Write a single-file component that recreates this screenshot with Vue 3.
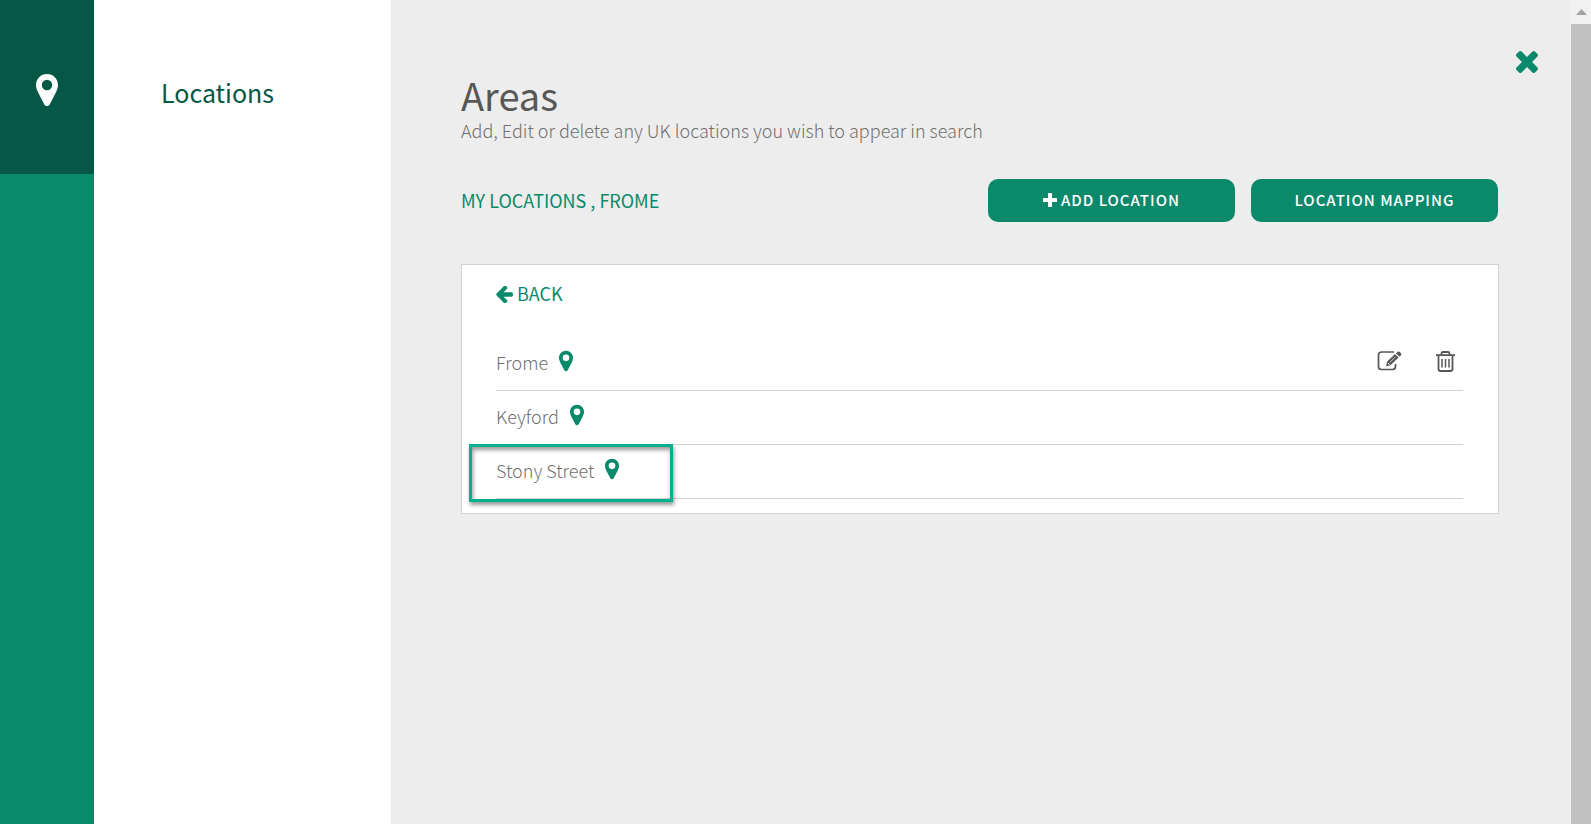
<script setup>
const locations = [
  { name: 'Frome', editable: true },
  { name: 'Keyford' },
  { name: 'Stony Street', highlighted: true },
]
const pin = 'M11 0C4.900 0 0 4.900 0 11C0 14 1.200 16.500 2.400 19L8.300 30.500C9.500 32.600 12.500 32.600 13.700 30.500L19.600 19C20.800 16.500 22 14 22 11C22 4.900 17.100 0 11 0ZM11 5.800A5.200 5.200 0 1 1 11 16.200A5.200 5.200 0 1 1 11 5.800Z'
</script>

<template>
  <div class="app">
    <nav class="rail">
      <a class="rail-item" href="#" aria-label="Locations">
        <svg class="rail-pin" viewBox="0 0 22 32"><path :d="pin" fill-rule="evenodd" /></svg>
      </a>
    </nav>
    <aside class="panel"><a href="#">Locations</a></aside>
    <main class="main">
      <button class="close" type="button" aria-label="Close">
        <svg viewBox="302 366 1188 1188"><path d="M1490 1322q0 40-28 68l-136 136q-28 28-68 28t-68-28l-294-294-294 294q-28 28-68 28t-68-28l-136-136q-28-28-28-68t28-68l294-294-294-294q-28-28-28-68t28-68l136-136q28-28 68-28t68 28l294 294 294-294q28-28 68-28t68 28l136 136q28 28 28 68t-28 68l-294 294 294 294q28 28 28 68z" /></svg>
      </button>
      <h1>Areas</h1>
      <p class="intro">Add, Edit or delete any UK locations you wish to appear in search</p>
      <div class="toolbar">
        <div class="crumbs"><a href="#">MY LOCATIONS</a> , <a href="#">FROME</a></div>
        <button class="action" type="button">
          <svg viewBox="0 0 14 14"><path d="M5 .5q0-.5.500-.5h3q.5 0 .5.500V5h4.500q.5 0 .5.500v3q0 .5-.5.500H9v4.500q0 .5-.5.500h-3q-.5 0-.5-.5V9H.5q-.5 0-.5-.5v-3q0-.5.500-.5H5z" /></svg>
          ADD LOCATION
        </button>
        <button class="action" type="button">LOCATION MAPPING</button>
      </div>
      <section class="card">
        <a class="back" href="#">
          <svg viewBox="180 210 1484 1500"><path d="M1664 896v128q0 53-32.500 90.500t-84.500 37.500h-704l293 294q38 36 38 90t-38 90l-75 76q-37 37-90 37-52 0-91-37l-651-652q-37-37-37-90 0-52 37-91l651-650q38-38 91-38 52 0 90 38l75 74q38 38 38 91t-38 91l-293 293h704q52 0 84.500 37.500t32.500 90.500z" /></svg>
          BACK
        </a>
        <ul>
          <li v-for="loc in locations" :key="loc.name">
            <span>{{ loc.name }}</span>
            <svg class="pin" viewBox="0 0 22 32"><path :d="pin" fill-rule="evenodd" /></svg>
            <div v-if="loc.editable" class="tools">
              <button type="button" aria-label="Edit">
                <svg class="edit" viewBox="0 0 24 20">
                  <path class="line" d="M16.500 1H4a3 3 0 0 0-3 3v11.500a3 3 0 0 0 3 3h11a3 3 0 0 0 3-3V13" stroke-width="1.700" />
                  <path d="M8.500 15.500l1.200-5L17.500 2.900l3.600 3.700-7.800 7.500z" />
                  <path d="M18.500 2.200L20 .8q1-.8 2 0l1.400 1.400q.9 1 0 2L22 5.700z" />
                  <path d="M12.300 11.300l5.500-5.200" stroke="#fff" stroke-width=".7" />
                  <path d="M10.400 12l1.700 1.700" stroke="#fff" stroke-width="1" />
                </svg>
              </button>
              <button type="button" aria-label="Delete">
                <svg class="trash" viewBox="0 0 19 21">
                  <path class="line" d="M0 4.200h19M5.500 4V2.500Q5.500 1 7 1h5q1.500 0 1.500 1.500V4M2.500 4.500V18q0 2 2 2h10q2 0 2-2V4.500" stroke-width="1.800" />
                  <path class="line" d="M6 8v8.500M9.500 8v8.500M13 8v8.500" stroke-width="1.500" />
                </svg>
              </button>
            </div>
            <div v-if="loc.highlighted" class="highlight"></div>
          </li>
        </ul>
      </section>
    </main>
    <div class="scrollbar">
      <svg viewBox="0 0 20 24"><path d="M5 15l5.500-6 5.500 6z" /></svg>
      <div class="thumb"></div>
    </div>
  </div>
</template>

<style>
body { background: #ededed; }
</style>

<style scoped>
.app {
  display: flex;
  min-height: 100vh;
  font-family: "Noto Sans CJK SC", "Open Sans", sans-serif;
  font-size: 18px;
  line-height: 24px;
  color: #575756;
  background: #ededed;
}
a { color: inherit; text-decoration: none; }
button { font: inherit; color: inherit; border: 0; padding: 0; background: none; cursor: pointer; }
svg { display: block; fill: currentColor; flex: none; }
.line { fill: none; stroke: currentColor; }
.rail { width: 94px; background: #0a896b; flex: none; }
.rail-item {
  display: flex;
  justify-content: center;
  height: 174px;
  padding-top: 74px;
  box-sizing: border-box;
  background: #055845;
  color: #fff;
}
.rail-pin { width: 22px; height: 32px; }
.panel {
  width: 297px;
  box-sizing: border-box;
  padding: 77px 0 0 67px;
  flex: none;
  background: #fff;
  color: #055845;
  font-size: 25px;
  line-height: 30px;
}
.main { position: relative; flex: 1; padding: 75px 70px 0; }
.close { position: absolute; top: 51px; right: 31px; color: #0a896b; }
.close svg { width: 22px; height: 22px; }
h1 { margin: 0; font-size: 38px; line-height: 40px; font-weight: 400; }
.intro { margin: 0; line-height: 30px; font-weight: 300; color: #706f6f; }
.toolbar { display: flex; align-items: center; gap: 16px; margin-top: 34px; padding-right: 1px; }
.crumbs { flex: 1; padding-bottom: 2px; color: #0a896b; }
.action {
  display: flex;
  align-items: center;
  justify-content: center;
  gap: 4px;
  width: 247px;
  height: 43px;
  padding-bottom: 2px;
  border-radius: 10px;
  background: #0a896b;
  color: #fff;
  font-size: 15px;
  font-weight: 500;
  letter-spacing: 1px;
}
.action svg { width: 14px; height: 14px; }
.card {
  margin-top: 42px;
  padding: 16px 35px 14px 34px;
  border: 1px solid #d2d2d2;
  background: #fff;
}
.back { display: flex; align-items: center; gap: 4px; color: #0a896b; }
.back svg { width: 17px; height: 17px; padding-top: 2px; }
ul { list-style: none; margin: 32px 0 0; padding: 0; }
li {
  position: relative;
  display: flex;
  align-items: center;
  gap: 11px;
  height: 54px;
  box-sizing: border-box;
  padding-bottom: 4px;
  border-bottom: 1px solid #d2d2d2;
  font-weight: 300;
}
li > span { color: #706f6f; }
.pin { width: 14px; height: 22px; padding-bottom: 1px; color: #0a896b; }
.tools { display: flex; align-items: center; gap: 34px; margin-left: auto; padding: 0 8px 1px 0; }
.edit { width: 25px; height: 20px; }
.trash { width: 19px; height: 21px; }
.highlight {
  position: absolute;
  left: -27px;
  top: -1px;
  width: 198px;
  height: 52px;
  border: 3px solid #05b08f;
  box-shadow: 1px 3px 4px rgba(0, 0, 0, 0.4), inset 1px 3px 4px rgba(0, 0, 0, 0.4);
}
.scrollbar { width: 20px; flex: none; padding-left: 2px; display: flex; flex-direction: column; background: #f1f1f1; }
.scrollbar svg { width: 20px; height: 24px; color: #a3a3a3; }
.thumb { flex: 1; background: #c1c1c1; }
</style>
